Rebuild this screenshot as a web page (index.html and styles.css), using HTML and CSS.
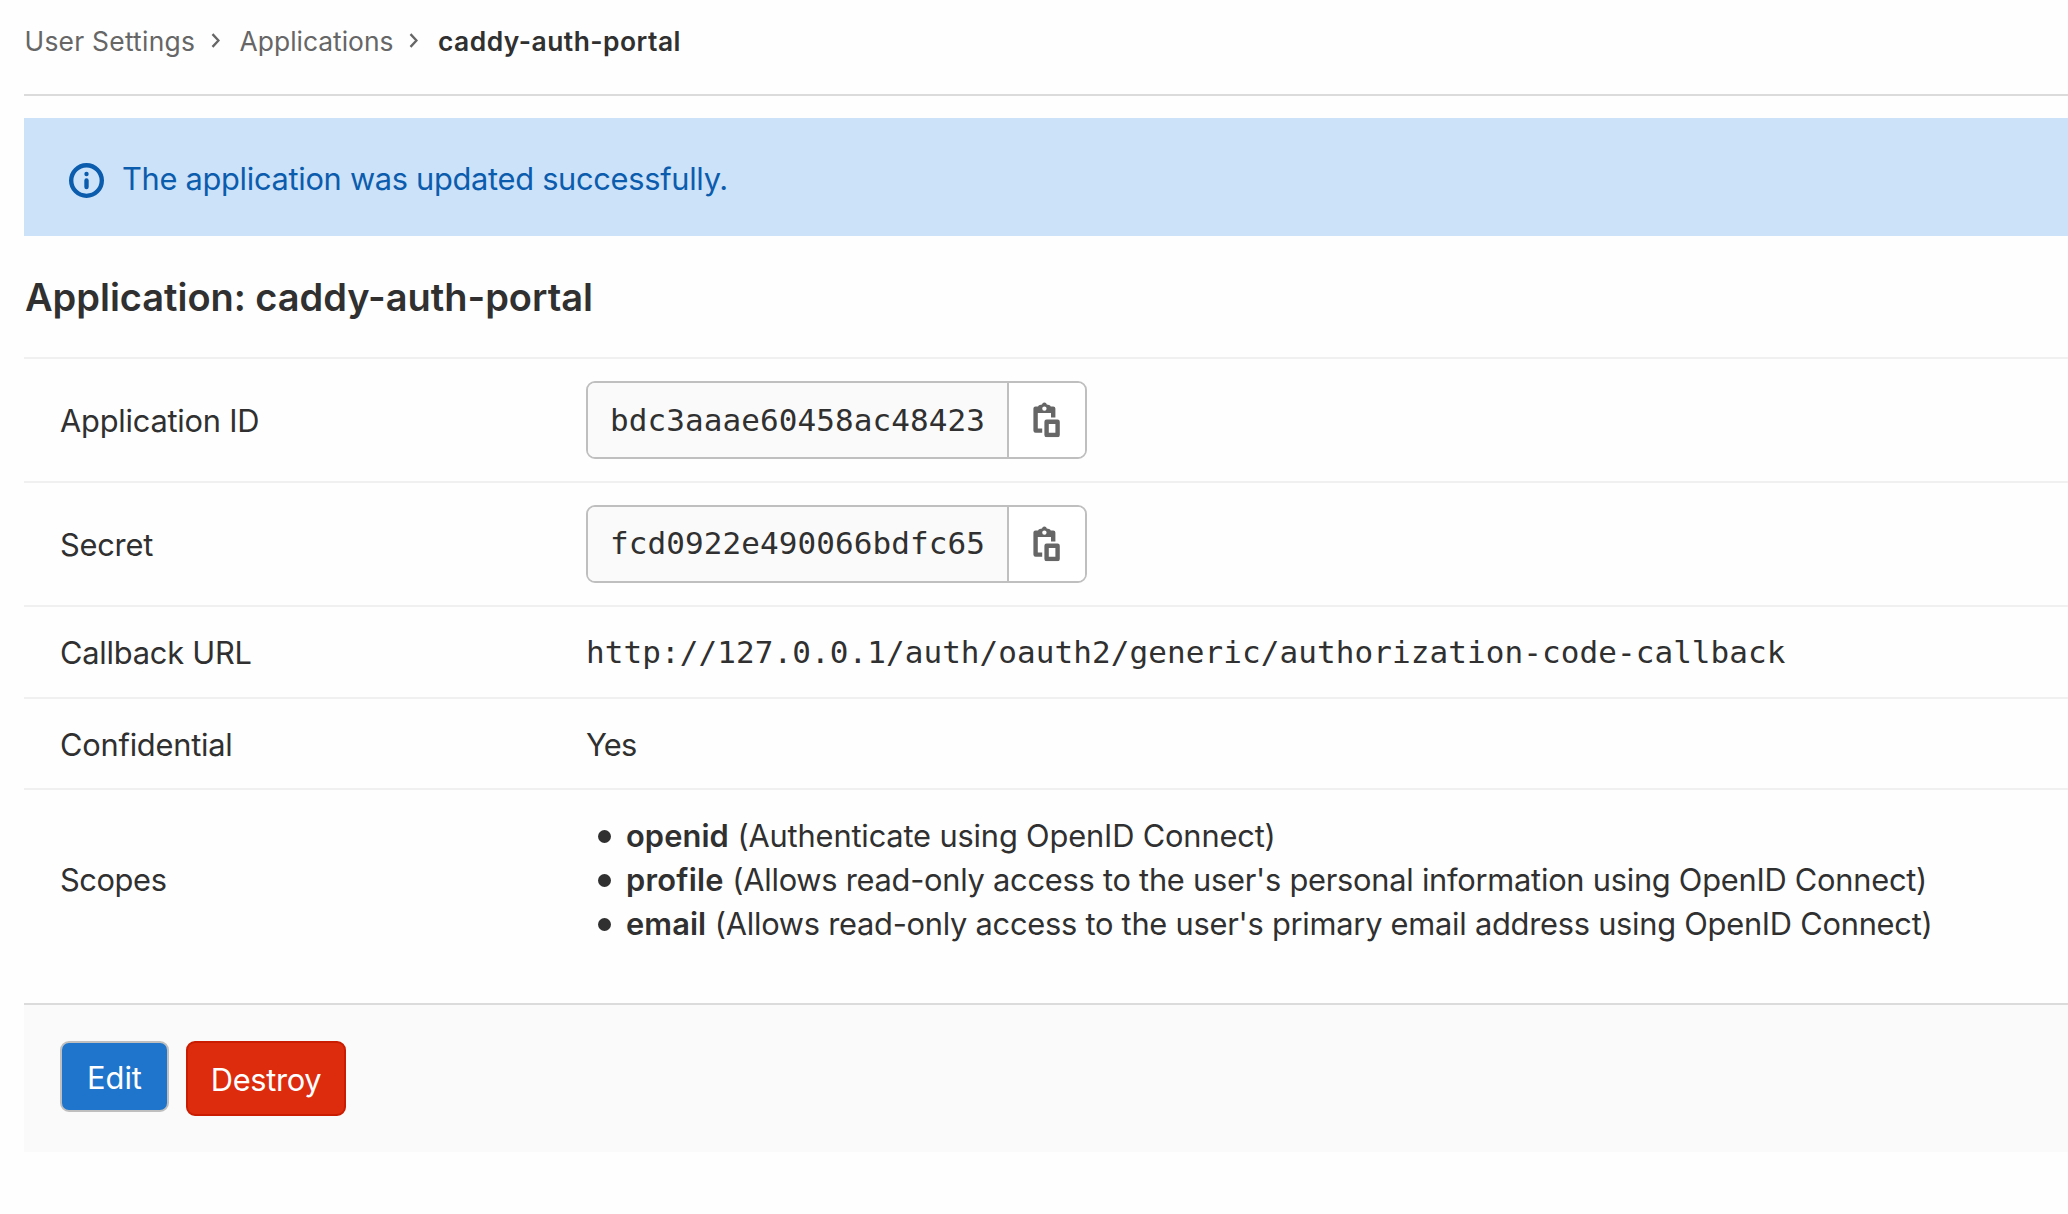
FILE: index.html
```html
<!DOCTYPE html>
<html lang="en">
<head>
<meta charset="utf-8">
<title>caddy-auth-portal · Applications · User Settings</title>
<link rel="stylesheet" href="styles.css">
</head>
<body>
<svg class="sprite" aria-hidden="true">
  <symbol id="chevron" viewBox="0 0 8 14"><path d="M1.2 1 6.8 7l-5.6 6" fill="none" stroke="currentColor" stroke-width="2.2"/></symbol>
  <symbol id="info" viewBox="0 0 16 16"><circle cx="8" cy="8" r="7" fill="none" stroke="currentColor" stroke-width="2"/><circle cx="8" cy="5" r="1"/><path d="M7 8a1 1 0 0 1 2 0v3a1 1 0 0 1-2 0z"/></symbol>
  <symbol id="copy" viewBox="0 0 16 16"><path fill-rule="evenodd" d="M6.2.6a1 1 0 0 1 1.6 0l.3.5 1 .3a1 1 0 0 1 .8.6H11a1 1 0 0 1 1 1v4h-2V5H4v7h2v2H3a1 1 0 0 1-1-1V3a1 1 0 0 1 1-1h1.1a1 1 0 0 1 .8-.6l1-.3zM7 4a1 1 0 1 0 0-2 1 1 0 0 0 0 2z"/><path fill-rule="evenodd" d="M8 8h5a1 1 0 0 1 1 1v6a1 1 0 0 1-1 1H8a1 1 0 0 1-1-1V9a1 1 0 0 1 1-1zm1 2v4h3v-4z"/></symbol>
</svg>
<main class="page">
  <nav class="breadcrumbs">
    <a class="crumb crumb-root">User Settings</a>
    <svg class="chevron"><use href="#chevron"/></svg>
    <a class="crumb">Applications</a>
    <svg class="chevron"><use href="#chevron"/></svg>
    <strong class="crumb-current">caddy-auth-portal</strong>
  </nav>
  <div class="alert">
    <svg class="alert-icon"><use href="#info"/></svg>
    <span class="alert-text">The application was updated successfully.</span>
  </div>
  <h1 class="title">Application: caddy-auth-portal</h1>
  <dl class="details">
    <div class="row row-input">
      <dt>Application ID</dt>
      <dd><div class="group"><span class="field">bdc3aaae60458ac48423</span><button class="copy" aria-label="Copy ID"><svg class="copy-icon"><use href="#copy"/></svg></button></div></dd>
    </div>
    <div class="row row-input">
      <dt>Secret</dt>
      <dd><div class="group"><span class="field field-secret">fcd0922e490066bdfc65</span><button class="copy" aria-label="Copy secret"><svg class="copy-icon"><use href="#copy"/></svg></button></div></dd>
    </div>
    <div class="row row-url">
      <dt>Callback URL</dt>
      <dd class="mono">http://127.0.0.1/auth/oauth2/generic/authorization-code-callback</dd>
    </div>
    <div class="row row-text">
      <dt>Confidential</dt>
      <dd class="answer">Yes</dd>
    </div>
    <div class="row row-scopes">
      <dt>Scopes</dt>
      <dd>
        <ul class="scopes">
          <li><b>openid</b> <span class="desc desc-openid">(Authenticate using OpenID Connect)</span></li>
          <li><b class="profile">profile</b> <span class="desc">(Allows read-only access to the user's personal information using OpenID Connect)</span></li>
          <li><b>email</b> <span class="desc">(Allows read-only access to the user's primary email address using OpenID Connect)</span></li>
        </ul>
      </dd>
    </div>
  </dl>
  <footer class="actions">
    <button class="btn btn-edit">Edit</button>
    <button class="btn btn-destroy">Destroy</button>
  </footer>
</main>
</body>
</html>
```
FILE: styles.css
```css
* { box-sizing: border-box; }
body {
  margin: 0;
  overflow: hidden;
  background: #fefefe;
  color: #303030;
  font: 400 30.8px/44px Inter, "Liberation Sans", sans-serif;
  letter-spacing: -0.23px;
  white-space: nowrap;
}
.sprite { position: absolute; width: 0; height: 0; }
svg { fill: currentColor; flex: none; }
.page { padding-left: 24px; }

.breadcrumbs {
  display: flex;
  align-items: center;
  height: 96px;
  padding-bottom: 12px;
  border-bottom: 2px solid #dbdbdb;
  font-size: 26.4px;
  color: #666;
  letter-spacing: 0;
}
.crumb-root { padding-left: 0.5px; letter-spacing: 0.25px; }
.crumb-current { font-weight: 600; color: #303030; letter-spacing: 0.48px; }
.chevron { width: 9px; height: 15px; margin: 0 19.5px 2px 16px; }

.alert {
  display: flex;
  align-items: center;
  height: 118px;
  margin-top: 22px;
  padding-left: 45px;
  background: #cbe2f9;
  color: #0b5cad;
}
.alert-icon { width: 35px; height: 35px; margin: 7px 18px 0 0; }
.alert-text { padding-top: 3px; letter-spacing: -0.3px; }

.title {
  margin: 0;
  height: 121px;
  padding: 39px 0 0 1px;
  font-size: 38px;
  font-weight: 600;
  letter-spacing: -0.03px;
}

.details { margin: 0; }
.row {
  display: grid;
  grid-template-columns: 526px 1fr;
  align-items: center;
  padding-left: 36px;
  border-top: 2px solid #f0f0f0;
}
.row-input { height: 124px; }
.row-url { height: 92px; }
.row-text { height: 91px; }
.row-scopes { height: 182px; }
dt { padding-top: 2px; }
.row-scopes dt { padding-top: 0; letter-spacing: -0.4px; }
dd { margin: 0; }
.mono, .field {
  font-family: "DejaVu Sans Mono", "Liberation Mono", monospace;
  font-size: 31px;
  letter-spacing: 0.08px;
}
.answer { padding-top: 2px; letter-spacing: -0.8px; }

.group {
  display: flex;
  width: 501px;
  height: 78px;
  border: 2px solid #bfbfbf;
  border-radius: 9px;
  overflow: hidden;
  background: #fff;
}
.field {
  display: flex;
  align-items: center;
  width: 421px;
  padding-left: 22px;
  border-right: 2px solid #bfbfbf;
  background: #fafafa;
}
.field-secret { padding-bottom: 2px; }
.copy {
  flex: 1;
  display: flex;
  align-items: center;
  justify-content: center;
  padding: 0;
  border: 0;
  background: #fff;
  color: #666;
}
.copy-icon { width: 35.2px; height: 35.2px; }

.scopes { list-style: none; margin: 0; padding: 0; }
.scopes li { display: flex; align-items: center; padding-left: 12px; }
.scopes li::before {
  content: "";
  width: 13px;
  height: 13px;
  margin: 1px 15px 0 0;
  border-radius: 50%;
  background: #303030;
}
.scopes b { font-weight: 600; letter-spacing: 0.1px; margin-right: 8.5px; }
.scopes .profile { letter-spacing: 0.25px; }
.desc { letter-spacing: -0.25px; }
.desc-openid { letter-spacing: -0.16px; }

.actions {
  display: flex;
  align-items: flex-start;
  gap: 17px;
  height: 149px;
  margin-top: 33px;
  padding: 36px 0 0 36px;
  border-top: 2px solid #dbdbdb;
  background: #fafafa;
}
.btn {
  padding: 2px 0 0;
  border: 2px solid;
  border-radius: 9px;
  color: #fff;
  font: inherit;
}
.btn-edit { width: 109px; height: 71px; background: #1f75cb; border-color: #bfbfbf; letter-spacing: 0; }
.btn-destroy { width: 160px; height: 75px; background: #dd2b0e; border-color: #c91c00; letter-spacing: -0.35px; }
```
